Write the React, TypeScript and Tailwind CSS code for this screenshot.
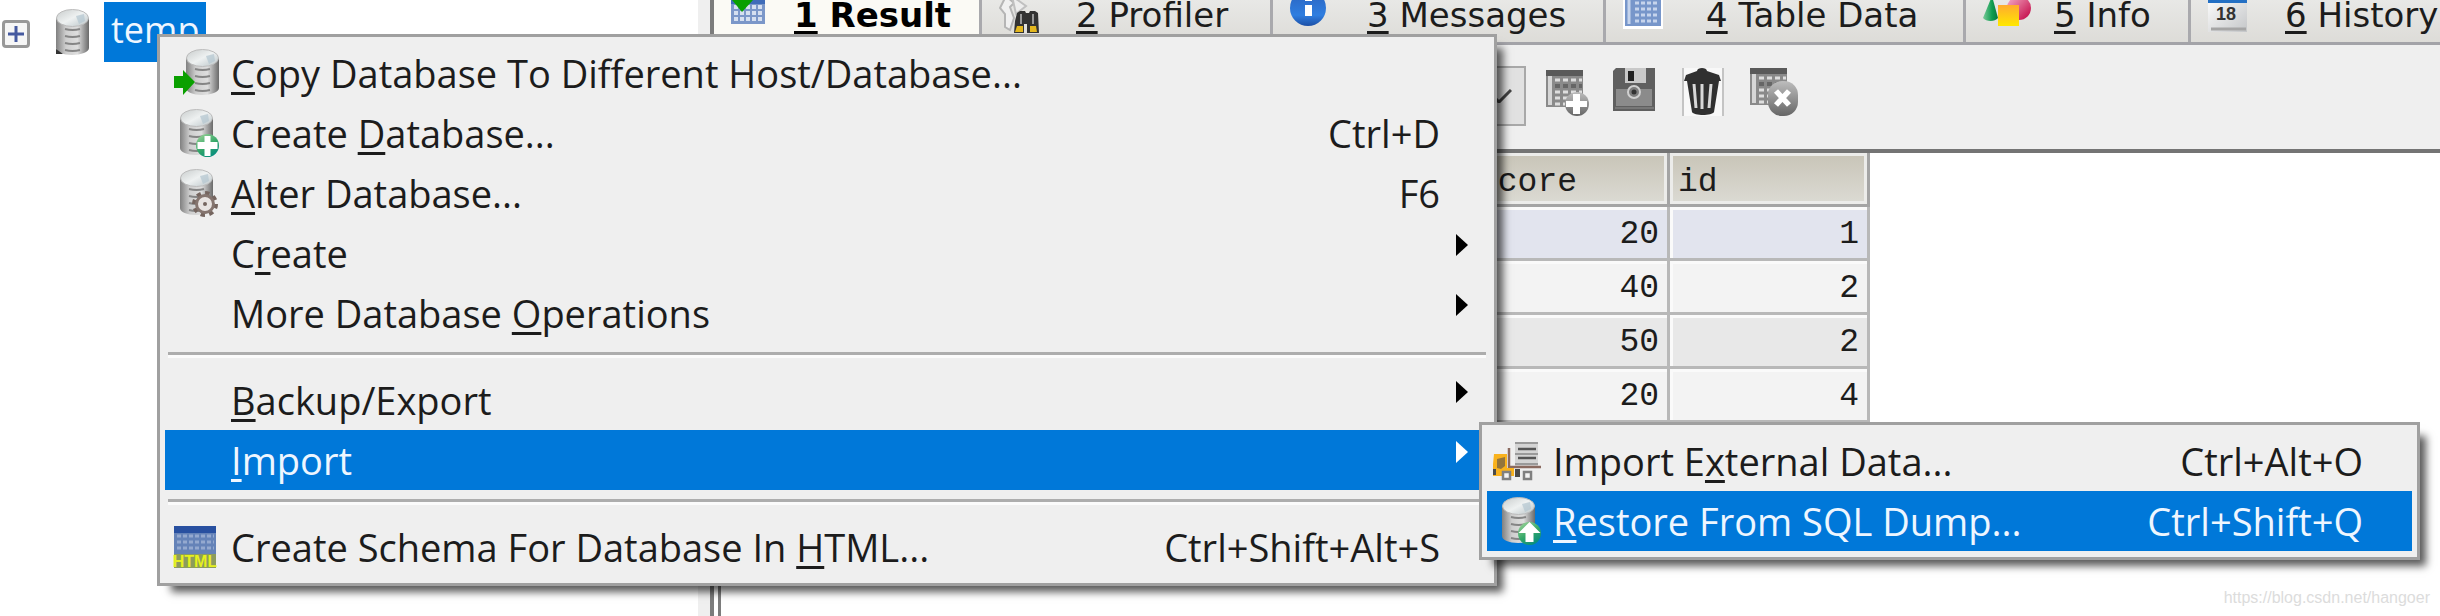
import type { ReactNode } from "react";
import clsx from "clsx";

const uiFont = "font-['Open_Sans','Noto_Sans',sans-serif]";
const tabFont = "font-['DejaVu_Sans',sans-serif]";
const monoFont = "font-['Liberation_Mono',monospace]";

/* ---------- Icons ---------- */

function IconDefs() {
  return (
    <svg width="0" height="0" className="absolute" aria-hidden="true">
      <defs>
        <linearGradient id="metal" x1="0" x2="1">
          <stop offset="0" stopColor="#808080" />
          <stop offset="0.3" stopColor="#cecece" />
          <stop offset="0.65" stopColor="#dedede" />
          <stop offset="1" stopColor="#6a6a6a" />
        </linearGradient>
        <linearGradient id="lid" x1="0" x2="1" y1="0" y2="1">
          <stop offset="0" stopColor="#c8cccc" />
          <stop offset="0.5" stopColor="#eef1f1" />
          <stop offset="1" stopColor="#b9c4c8" />
        </linearGradient>
        <linearGradient id="green" x1="0" x2="0.6" y1="0" y2="1">
          <stop offset="0" stopColor="#a5d79b" />
          <stop offset="0.6" stopColor="#35a768" />
          <stop offset="1" stopColor="#0a8f7c" />
        </linearGradient>
        <linearGradient id="blueBall" x1="0" x2="0" y1="0" y2="1">
          <stop offset="0" stopColor="#2b62bd" />
          <stop offset="0.7" stopColor="#2f7ee0" />
          <stop offset="1" stopColor="#1c4fa6" />
        </linearGradient>
        <linearGradient id="grayBall" x1="0" x2="0" y1="0" y2="1">
          <stop offset="0" stopColor="#bdbdbd" />
          <stop offset="1" stopColor="#666" />
        </linearGradient>
        <linearGradient id="sheet" x1="0" x2="1" y1="0" y2="1">
          <stop offset="0" stopColor="#ffffff" />
          <stop offset="1" stopColor="#c4c6c8" />
        </linearGradient>
        <linearGradient id="cone" x1="0" x2="1">
          <stop offset="0" stopColor="#7cc99a" />
          <stop offset="0.6" stopColor="#0f9d50" />
          <stop offset="1" stopColor="#08793c" />
        </linearGradient>
        <linearGradient id="pink" x1="0" x2="1" y1="0" y2="1">
          <stop offset="0" stopColor="#f7b3cc" />
          <stop offset="1" stopColor="#c00040" />
        </linearGradient>
        <linearGradient id="yellow" x1="0" x2="0" y1="0" y2="1">
          <stop offset="0" stopColor="#ffab2e" />
          <stop offset="1" stopColor="#ffe800" />
        </linearGradient>
      </defs>
    </svg>
  );
}

function Cylinder({ x = 9, y = 1 }: { x?: number; y?: number }) {
  return (
    <g transform={`translate(${x} ${y})`}>
      <path d="M0 9v30c0 4 7 7 16 7s17-3 17-7V9z" fill="url(#metal)" />
      <g fill="none" stroke="#858585" strokeWidth="2">
        <path d="M9 20c4 1 11 1 15 0M9 27c4 1 11 1 15 0M9 34c4 1 11 1 15 0M9 41c4 1 11 1 15 0" />
      </g>
      <ellipse cx="16.500" cy="9" rx="16" ry="8.500" fill="url(#lid)" stroke="#bcbcbc" />
      <path d="M20 7l8-2 1 7-6 3z" fill="#b4c6d0" opacity="0.7" />
    </g>
  );
}

function CopyDbIcon() {
  return (
    <svg width="50" height="50" viewBox="0 0 50 50">
      <Cylinder x={15} />
      <path d="M3 28h9v-6l12 12-12 13v-7H3z" fill="#0aa000" />
    </svg>
  );
}

function CreateDbIcon() {
  return (
    <svg width="50" height="50" viewBox="0 0 50 50">
      <Cylinder />
      <circle cx="36.500" cy="37.500" r="11.500" fill="url(#green)" />
      <path d="M33.500 28h6v6h7v7h-7v7h-6v-7h-7v-7h7z" fill="#fff" />
    </svg>
  );
}

function AlterDbIcon() {
  return (
    <svg width="50" height="50" viewBox="0 0 50 50">
      <Cylinder />
      <circle cx="34" cy="36" r="11" fill="none" stroke="#75655f" strokeWidth="4" strokeDasharray="4.300 4.300" />
      <circle cx="34" cy="36" r="8.500" fill="#e9e4e2" stroke="#85756f" strokeWidth="3" />
      <circle cx="34" cy="36" r="2" fill="#75655f" />
    </svg>
  );
}

function RestoreIcon() {
  return (
    <svg width="50" height="50" viewBox="0 0 50 50">
      <Cylinder />
      <circle cx="36.500" cy="37.500" r="11.500" fill="url(#green)" />
      <path d="M36.500 26l11 11h-7v9h-8v-9h-7z" fill="#fff" />
    </svg>
  );
}

function HtmlTableIcon() {
  return (
    <svg width="50" height="50" viewBox="0 0 50 50">
      <path d="M3 4h42v42H3z" fill="#6583b8" />
      <path d="M3 4h42v7H3z" fill="#2850a0" />
      <path d="M6 14h37M6 20h37M6 26h37" stroke="#94a9cf" strokeWidth="3" strokeDasharray="4 2" />
      <path d="M3 32h42v14H3z" fill="#8c9c5c" />
      <text x="24" y="45" textAnchor="middle" fontSize="16" fontWeight="700" fontFamily="Liberation Sans" fill="#e6f01e">
        HTML
      </text>
    </svg>
  );
}

function ForkliftIcon() {
  return (
    <svg width="50" height="50" viewBox="0 0 50 50">
      <path d="M22 6h23v24H22z" fill="#d4d4d4" />
      <path d="M22 7h23M22 18h23M22 28h23" stroke="#9a9a9a" strokeWidth="2" />
      <path d="M25 13h18M25 22h18" stroke="#555" strokeWidth="2.500" />
      <path d="M16 12v21M16 31h32" stroke="#8a6a60" strokeWidth="2.500" fill="none" />
      <path d="M1 18h13v14h7v8H0V28z" fill="#f9b21d" />
      <path d="M4 23l8-2v9l-4 3-4-1z" fill="#94753c" />
      <path d="M22 33h5v8h-5zM0 33h3v6H0z" fill="#4a4a4a" />
      <path d="M10 36h7v7h-7zM31 36h7v7h-7z" fill="#f4f4f4" stroke="#808080" strokeWidth="2.500" />
    </svg>
  );
}

function TreeDbIcon() {
  return (
    <svg width="34" height="48" viewBox="0 0 34 48">
      <Cylinder x={0} y={1} />
      <path d="M0 41l7 5H0z" fill="#333" />
    </svg>
  );
}

function ResultTabIcon() {
  return (
    <svg width="34" height="40" viewBox="0 0 34 40">
      <path d="M0 0h34v40H0z" fill="#7b97c9" />
      <path d="M0 0h34v20H0z" fill="#3f6cb9" />
      <path d="M3 23h29M3 29h29M3 35h29" stroke="#d5dff0" strokeWidth="4" strokeDasharray="4 2" />
      <path d="M1 16h21L11 28z" fill="#0aa000" />
    </svg>
  );
}

function ProfilerTabIcon() {
  return (
    <svg width="40" height="46" viewBox="0 0 40 46">
      <path d="M7 8l8 7-4 4 4 11-4 12-5-3V26L1 20z" fill="#f0f0f0" stroke="#b5b5b5" strokeWidth="2" />
      <path d="M13 8l14 10-10 8z" fill="#ededed" stroke="#c0c0c0" strokeWidth="2" />
      <path d="M18 25l3-2h5l1 2h3l1-2h5l3 2 1 20H28V36h-3v9H15l1-12z" fill="#333" />
      <path d="M22 26v10M34 26v10" stroke="#999" strokeWidth="2" />
      <path d="M18 38h6v6h-8zM31 38h6l1 6h-7z" fill="#e3b71f" />
    </svg>
  );
}

function MessagesTabIcon() {
  return (
    <svg width="37" height="40" viewBox="0 0 37 40">
      <circle cx="18" cy="21" r="18" fill="url(#blueBall)" />
      <path d="M15 8h7v6h-7zM15 18h7v11h-7z" fill="#fff" />
    </svg>
  );
}

function TableTabIcon() {
  return (
    <svg width="40" height="42" viewBox="0 0 40 42">
      <path d="M0 0h40v42H0z" fill="#fff" />
      <path d="M2 0h36v39H2z" fill="#7796ca" />
      <path d="M6 0v37" stroke="#c6d4ec" strokeWidth="3" />
      <path d="M12 16h24M12 22h24M12 28h24M12 34h24" stroke="#c6d4ec" strokeWidth="3" strokeDasharray="4 2" />
    </svg>
  );
}

function InfoTabIcon() {
  return (
    <svg width="48" height="42" viewBox="0 0 48 42">
      <path d="M9 12L0 34c3 4 12 4 15 0z" fill="url(#cone)" />
      <circle cx="36" cy="24" r="12" fill="url(#pink)" />
      <path d="M15 21h21v21H15z" fill="url(#yellow)" />
    </svg>
  );
}

function HistoryTabIcon() {
  return (
    <svg width="40" height="46" viewBox="0 0 40 46">
      <path d="M0 10h39v36H0z" fill="url(#sheet)" />
      <path d="M0 10h39v7H0z" fill="#2470c4" />
      <path d="M3 43h35" stroke="#a5a5a5" strokeWidth="3" />
      <text x="18" y="34" textAnchor="middle" fontSize="18" fontWeight="700" fontFamily="Liberation Sans" fill="#333">
        18
      </text>
    </svg>
  );
}

function GraySheet() {
  return (
    <>
      <path d="M1 2h37v37H1z" fill="#8a8a8a" />
      <path d="M1 2h37v6H1z" fill="#5a5a5a" />
      <path d="M5 8v29" stroke="#d6d6d6" strokeWidth="4" />
      <path d="M10 12h27M10 24h27M10 30h27M10 36h27" stroke="#dedede" strokeWidth="3" strokeDasharray="5 3" />
      <path d="M10 18h27" stroke="#666" strokeWidth="4" strokeDasharray="5 3" />
    </>
  );
}

function AddRowIcon() {
  return (
    <svg width="48" height="48" viewBox="0 0 48 48">
      <GraySheet />
      <circle cx="32" cy="36" r="12" fill="url(#grayBall)" />
      <path d="M28 26h7v7h7v6h-7v7h-7v-7h-7v-6h7z" fill="#fff" />
    </svg>
  );
}

function SaveIcon() {
  return (
    <svg width="48" height="48" viewBox="0 0 48 48">
      <path d="M3 0h39v43H0V3z" fill="#5f5f5f" />
      <path d="M3 21h36v17H3z" fill="#8b8b8b" />
      <path d="M12 0h21v15H12z" fill="#c9c9c9" />
      <path d="M15 3h6v10h-6z" fill="#222" />
      <circle cx="21" cy="24" r="6" fill="#7d7d7d" stroke="#d0d0d0" strokeWidth="2" />
      <circle cx="21" cy="24" r="2.500" fill="#333" />
      <path d="M2 40h39" stroke="#777" strokeWidth="2" />
    </svg>
  );
}

function TrashIcon() {
  return (
    <svg width="48" height="48" viewBox="0 0 48 48">
      <path d="M1 0h42v48H1z" fill="#f8f8f8" />
      <path d="M2 0v48M42 0v48" stroke="#c4c4c4" strokeWidth="2" />
      <path d="M16 3c0-4 10-4 10 0l12 4 2 6h-2l-5 31c-2 4-20 4-22 0L6 13H3l2-6z" fill="#303030" />
      <path d="M13 16l2 24M21 16v25M30 16l-2 24" stroke="#d8d8d8" strokeWidth="3" />
    </svg>
  );
}

function CancelRowIcon() {
  return (
    <svg width="50" height="48" viewBox="0 0 50 48">
      <g transform="translate(0 -2)">
        <GraySheet />
      </g>
      <rect x="19" y="13" width="30" height="35" rx="14" fill="url(#grayBall)" />
      <path d="M27 23l13 14M40 23L27 37" stroke="#fff" strokeWidth="5.500" />
    </svg>
  );
}

/* ---------- Text helpers ---------- */

// "&" marks the access key, as in native menus
function Label({ text }: { text: string }) {
  const at = text.indexOf("&");
  if (at < 0) return <>{text}</>;
  return (
    <>
      {text.slice(0, at)}
      <u className="underline decoration-[3px] underline-offset-4 [text-decoration-skip-ink:none]">
        {text[at + 1]}
      </u>
      {text.slice(at + 2)}
    </>
  );
}

/* ---------- Context menu ---------- */

type Item = {
  label: string;
  icon?: ReactNode;
  shortcut?: string;
  submenu?: boolean;
  active?: boolean;
};

function MenuItem({ label, icon, shortcut, submenu, active }: Item) {
  return (
    <button
      role="menuitem"
      type="button"
      className={clsx(
        "flex h-[60px] w-full items-center pl-[6px] text-left whitespace-nowrap",
        active ? "bg-[#0078d9] text-[#eef6ff]" : "text-[#1c1c1c]"
      )}
    >
      <span className="mr-[10px] w-[50px] shrink-0">{icon}</span>
      <span className="flex-1">
        <Label text={label} />
      </span>
      <span>{shortcut}</span>
      <span className="flex w-[49px] justify-end pr-[21px] pb-4">
        {submenu && (
          <svg width="12" height="22" viewBox="0 0 12 22" fill={active ? "#fff" : "#000"}>
            <path d="M0 0l12 11L0 22z" />
          </svg>
        )}
      </span>
    </button>
  );
}

function Separator() {
  return (
    <div role="separator" className="mx-[3px] mt-[9px] mb-3 h-[6px] border-t-3 border-[#adadad] bg-[#fbfbfb]" />
  );
}

function Menu({ className, label, children }: { className: string; label: string; children: ReactNode }) {
  return (
    <div
      role="menu"
      aria-label={label}
      className={clsx(
        "absolute border-3 border-[#a0a0a0] bg-[#efefef] px-[5px] py-[6px] text-[38px] leading-[48px] shadow-[10px_10px_8px_-4px_rgba(0,0,0,0.65)]",
        uiFont,
        className
      )}
    >
      {children}
    </div>
  );
}

/* ---------- Result pane ---------- */

const tabs = [
  { label: "&1 Result", icon: <ResultTabIcon />, width: "w-[268px]", slot: "w-[63px]", pad: "pb-[18px]" },
  { label: "&2 Profiler", icon: <ProfilerTabIcon />, width: "w-[291px]", slot: "w-[77px]", pad: "pb-[8px]" },
  { label: "&3 Messages", icon: <MessagesTabIcon />, width: "w-[333px]", slot: "w-[77px]", pad: "pb-[15px]" },
  { label: "&4 Table Data", icon: <TableTabIcon />, width: "w-[360px]", slot: "w-[83px]", pad: "pb-[13px]" },
  { label: "&5 Info", icon: <InfoTabIcon />, width: "w-[225px]", slot: "w-[71px]", pad: "pb-[16px]" },
  { label: "&6 History", icon: <HistoryTabIcon />, width: "w-[260px]", slot: "w-[77px]", pad: "pb-[10px]" },
];

const tools = [
  { name: "Add row", icon: <AddRowIcon /> },
  { name: "Save", icon: <SaveIcon /> },
  { name: "Delete", icon: <TrashIcon /> },
  { name: "Cancel", icon: <CancelRowIcon /> },
];

const rows = [
  { score: 20, id: 1, bg: "bg-[#e2e4ee]" },
  { score: 40, id: 2, bg: "bg-[#f3f3f3]" },
  { score: 50, id: 2, bg: "bg-[#e8e8e8]" },
  { score: 20, id: 4, bg: "bg-[#f3f3f3]" },
];

function TabBar() {
  return (
    <div role="tablist" className="flex h-[45px] border-b-3 border-[#a3a3a8] bg-[#e4e4e2]">
      {tabs.map((tab, i) => (
        <button
          key={tab.label}
          role="tab"
          type="button"
          aria-selected={i === 0}
          className={clsx(
            "flex h-full shrink-0 items-end border-r-3 border-[#a9a9ad] pl-[17px] text-left text-[34px] leading-[30px] whitespace-nowrap",
            tabFont,
            tab.width,
            i === 0
              ? "bg-[#fbfaf5] font-bold text-black"
              : "bg-linear-to-b from-[#e8e8e6] to-[#dddcd8] text-[#1c1c1c]"
          )}
        >
          <span className={clsx("shrink-0", tab.slot, tab.pad)}>{tab.icon}</span>
          <span className="self-start">
            <Label text={tab.label} />
          </span>
        </button>
      ))}
    </div>
  );
}

function Toolbar() {
  return (
    <div className="flex h-[108px] items-start border-b-4 border-[#747474] bg-[#efefef] pt-[21px] pl-[586px]">
      <button
        type="button"
        aria-label="Choose result"
        className="flex h-[60px] w-[226px] items-center justify-end border-2 border-[#a8a8a8] bg-[#e1e1e1] pr-3"
      >
        <svg width="26" height="14" viewBox="0 0 26 14" fill="none" stroke="#444" strokeWidth="3">
          <path d="M1 1l12 12L25 1" />
        </svg>
      </button>
      <div className="flex gap-5 pt-[2px] pl-[19px]">
        {tools.map((tool) => (
          <button key={tool.name} type="button" aria-label={tool.name}>
            {tool.icon}
          </button>
        ))}
      </div>
    </div>
  );
}

function ResultGrid() {
  const th =
    "h-[54px] border-r-3 border-b-3 border-[#a4a4a4] bg-linear-to-b from-[#c8c4b7] to-[#dcdbd4] px-2 pt-2 text-left font-normal shadow-[inset_3px_3px_0_#ececea,inset_-3px_-3px_0_#ececea]";
  const td =
    "h-[54px] border-r-3 border-b-3 border-[#b8b8b8] px-2 pt-1 text-right shadow-[inset_3px_3px_0_#fafafa]";
  return (
    <table className={clsx("table-fixed border-separate border-spacing-0 text-[33px] leading-[42px] text-[#1c1c1c]", monoFont)}>
      <colgroup>
        <col className="w-[749px]" />
        <col className="w-[200px]" />
        <col className="w-[200px]" />
      </colgroup>
      <thead>
        <tr>
          <td className={th} />
          <th className={th}>score</th>
          <th className={th}>id</th>
        </tr>
      </thead>
      <tbody>
        {rows.map((row, i) => (
          <tr key={i} className={row.bg}>
            <td className={td} />
            <td className={td}>{row.score}</td>
            <td className={td}>{row.id}</td>
          </tr>
        ))}
      </tbody>
    </table>
  );
}

export default function App() {
  return (
    <div className="relative flex min-h-screen overflow-hidden bg-white">
      <IconDefs />

      {/* Object tree */}
      <aside className="w-[698px] shrink-0">
        <div className={clsx("flex items-center pt-[2px] pl-[2px] text-[36px] leading-[48px]", uiFont)}>
          <button
            type="button"
            aria-label="Expand temp"
            className="mt-1 flex size-7 items-center justify-center rounded border-3 border-[#989898] bg-[#f6f6f6]"
          >
            <svg width="16" height="16" viewBox="0 0 16 16" stroke="#45599f" strokeWidth="3">
              <path d="M8 0v16M0 8h16" />
            </svg>
          </button>
          <span className="ml-[26px]">
            <TreeDbIcon />
          </span>
          <span className="ml-[14px] h-[60px] bg-[#0078d9] px-[7px] pt-1 text-[#eef6ff]">temp</span>
        </div>
      </aside>

      {/* Splitter */}
      <div className="w-4 shrink-0 border-r-4 border-[#7c7c7c] bg-[#efefef]" />

      {/* Result pane */}
      <main className="flex min-w-0 flex-1 flex-col">
        <TabBar />
        <Toolbar />
        <div className="ml-1 flex-1 border-l-3 border-[#7c7c7c]">
          <ResultGrid />
        </div>
      </main>

      <Menu label="Database" className="top-[34px] left-[157px] w-[1340px]">
        <MenuItem icon={<CopyDbIcon />} label="&Copy Database To Different Host/Database..." />
        <MenuItem icon={<CreateDbIcon />} label="Create &Database..." shortcut="Ctrl+D" />
        <MenuItem icon={<AlterDbIcon />} label="&Alter Database..." shortcut="F6" />
        <MenuItem label="C&reate" submenu />
        <MenuItem label="More Database &Operations" submenu />
        <Separator />
        <MenuItem label="&Backup/Export" submenu />
        <MenuItem label="&Import" submenu active />
        <Separator />
        <MenuItem icon={<HtmlTableIcon />} label="Create Schema For Database In &HTML..." shortcut="Ctrl+Shift+Alt+S" />
      </Menu>

      <Menu label="Import" className="top-[422px] left-[1479px] w-[941px]">
        <MenuItem icon={<ForkliftIcon />} label="Import E&xternal Data..." shortcut="Ctrl+Alt+O" />
        <MenuItem icon={<RestoreIcon />} label="&Restore From SQL Dump..." shortcut="Ctrl+Shift+Q" active />
      </Menu>

      <p className="absolute right-[10px] bottom-1 font-['Liberation_Sans',sans-serif] text-base leading-7 text-[#dcdcdc]">
        https://blog.csdn.net/hangoer
      </p>
    </div>
  );
}
